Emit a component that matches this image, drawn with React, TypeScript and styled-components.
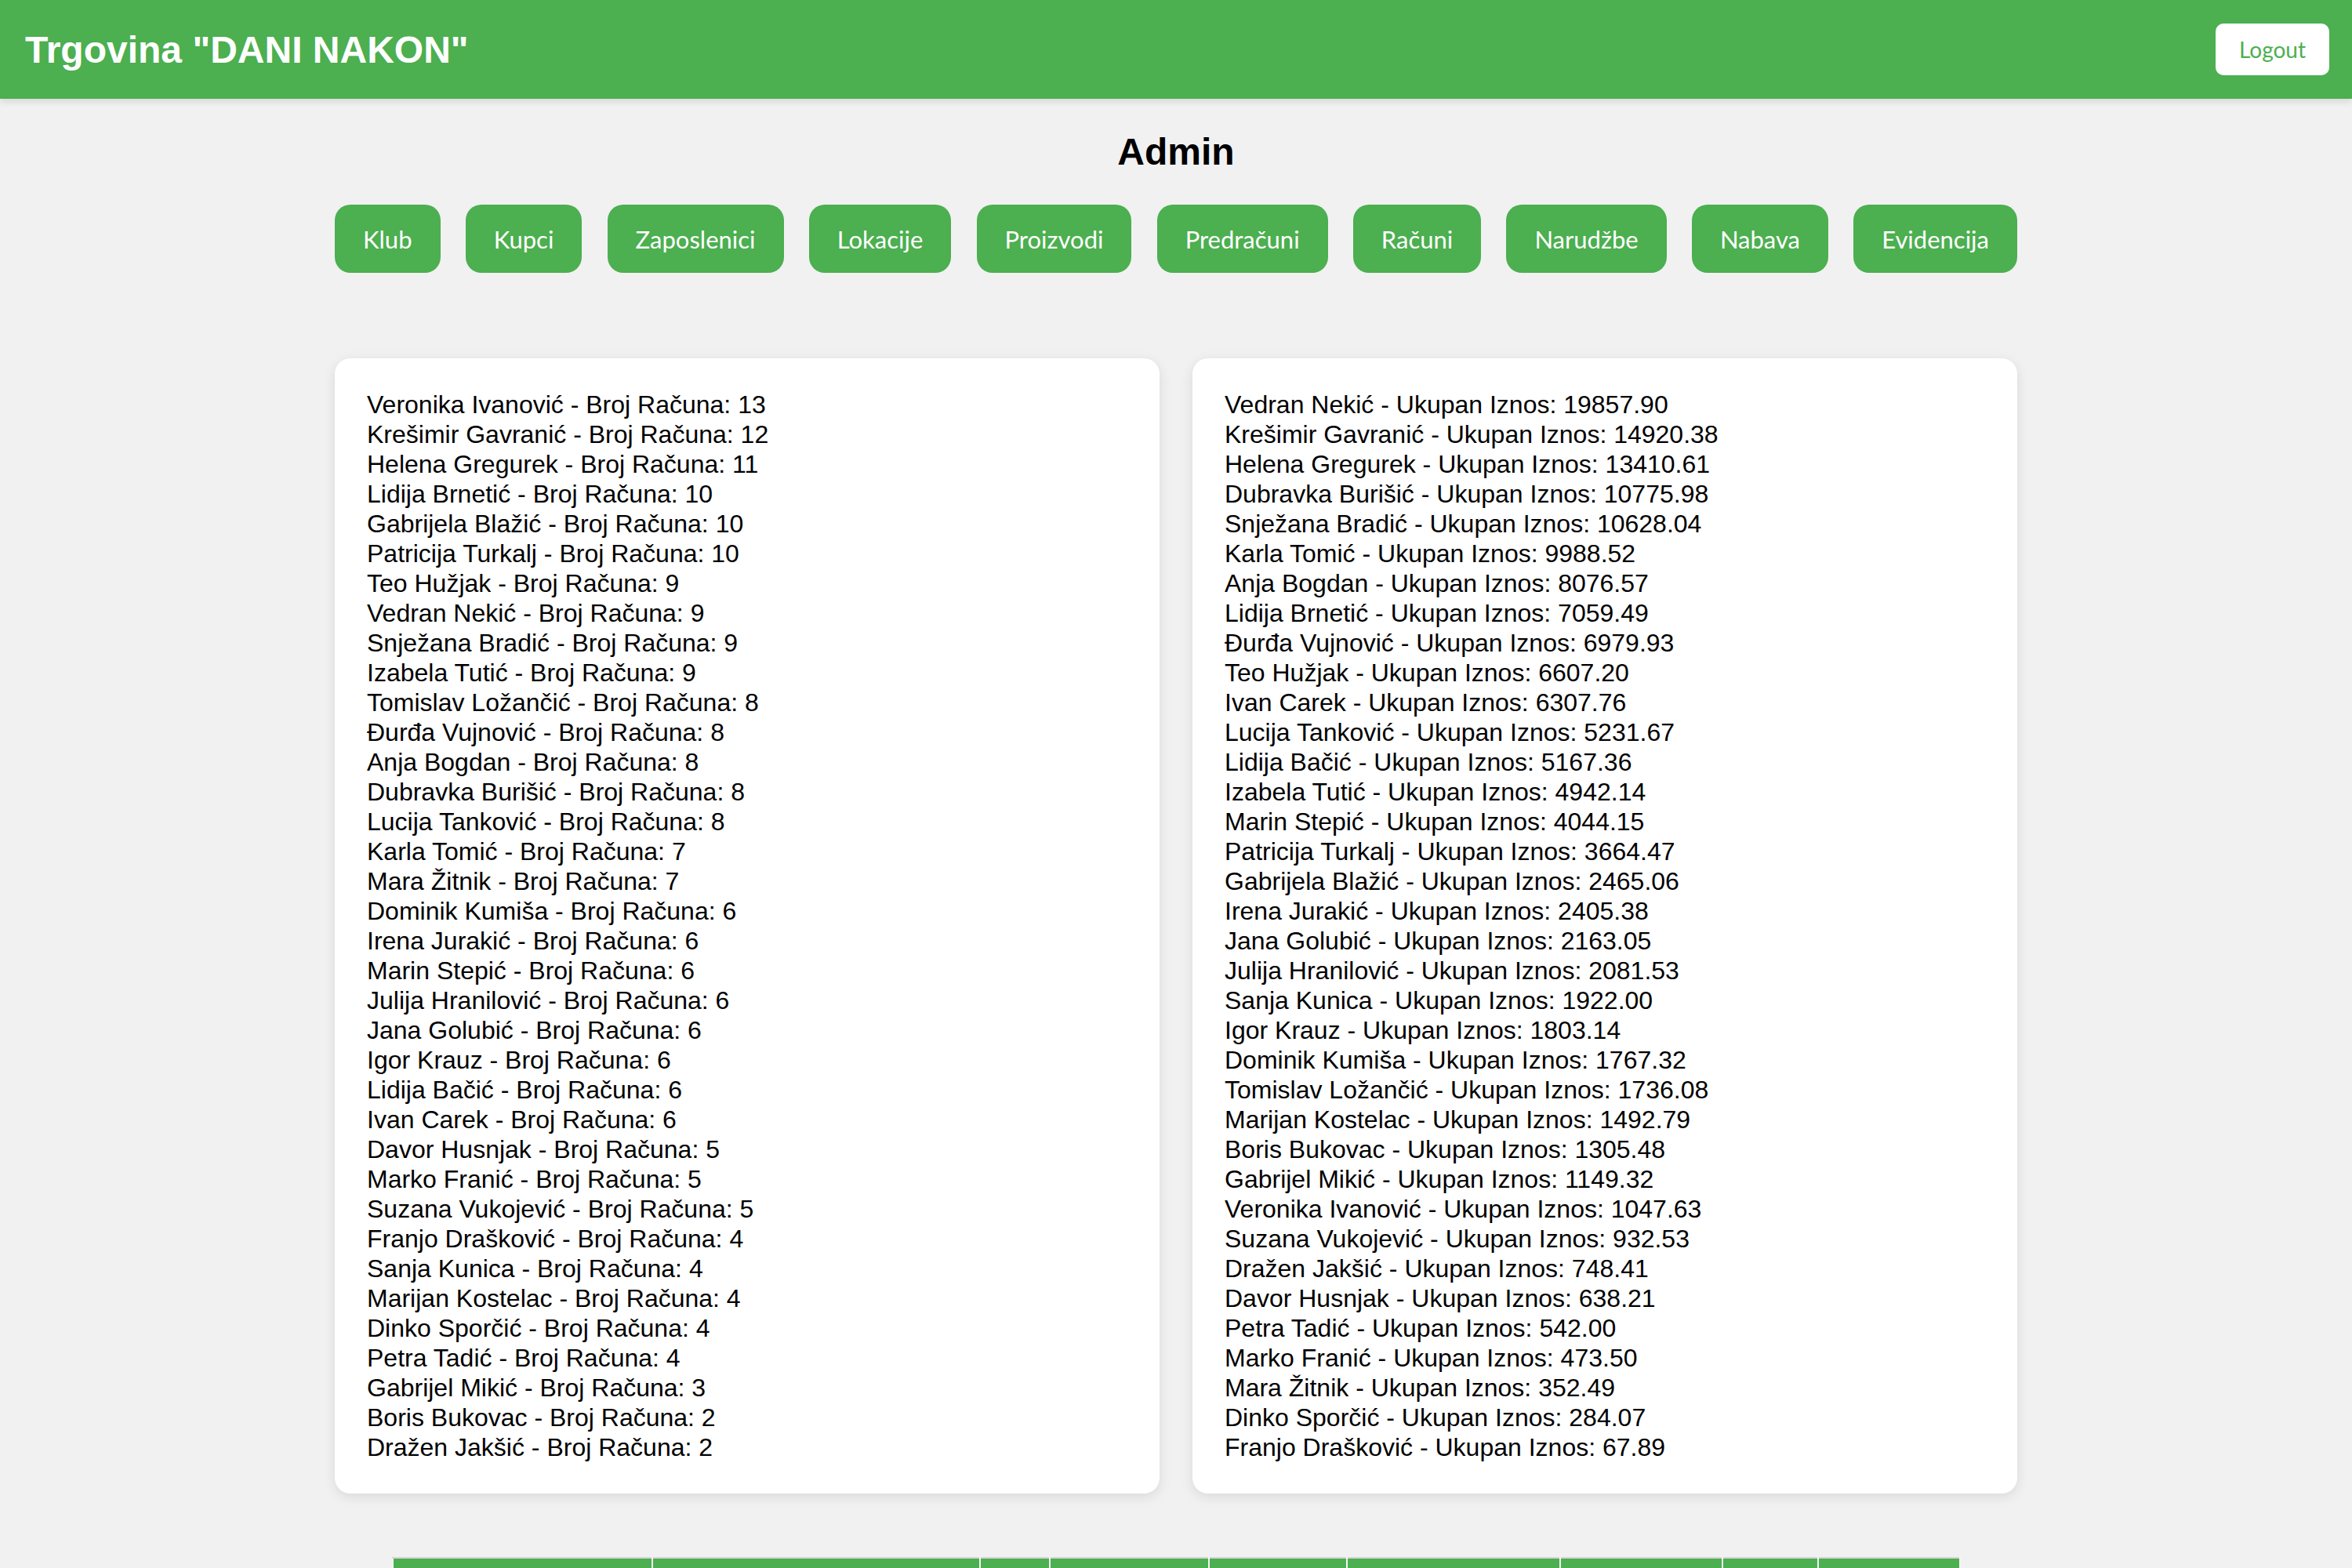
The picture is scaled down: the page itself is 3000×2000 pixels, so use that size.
import React from "react";
import styled, { createGlobalStyle } from "styled-components";

const GlobalStyle = createGlobalStyle`
  html, body {
    margin: 0;
    padding: 0;
    background: #f1f1f1;
    font-family: "Liberation Sans", Arial, sans-serif;
  }
  * { box-sizing: border-box; }
`;

const GREEN = "#4caf50";

const Header = styled.header`
  height: 126px;
  background: ${GREEN};
  display: flex;
  align-items: center;
  justify-content: space-between;
  padding: 0 29px 0 32px;
  box-shadow: 0 4px 8px rgba(0, 0, 0, 0.1);
`;

const Title = styled.h1`
  margin: 0;
  color: #fff;
  font-size: 48px;
  font-weight: bold;
  font-family: "Liberation Sans", Arial, sans-serif;
`;

const LogoutButton = styled.button`
  height: 66px;
  padding: 0 30px;
  background: #fff;
  color: ${GREEN};
  border: none;
  border-radius: 10px;
  font-family: Lato, "Open Sans", sans-serif;
  font-size: 28px;
  cursor: pointer;
`;

const Main = styled.main`
  max-width: 2146px;
  margin: 0 auto;
`;

const PageHeading = styled.h2`
  margin: 40px 0 40px;
  text-align: center;
  font-size: 48px;
  line-height: 55px;
  font-weight: bold;
  color: #000;
`;

const Nav = styled.nav`
  display: flex;
  justify-content: space-between;
  align-items: center;
`;

const NavButton = styled.button`
  height: 87px;
  padding: 0 36px;
  background: ${GREEN};
  color: #fff;
  border: none;
  border-radius: 20px;
  font-family: Lato, "Open Sans", sans-serif;
  font-size: 31px;
  cursor: pointer;
`;

const Grid = styled.section`
  margin-top: 109px;
  display: grid;
  grid-template-columns: 1fr 1fr;
  gap: 42px;
`;

const Card = styled.div`
  background: #fff;
  border-radius: 20px;
  padding: 40px 41px;
  box-shadow: 0 4px 16px rgba(0, 0, 0, 0.1);
`;

const Row = styled.div`
  font-size: 32px;
  line-height: 38px;
  color: #000;
  white-space: nowrap;
`;

const Table = styled.table`
  margin: 81px auto 0;
  border-collapse: collapse;
  table-layout: fixed;
`;

const Th = styled.th`
  background: ${GREEN};
  border: 2px solid #f4f4f4;
  border-top-color: #d6d6d6;
  height: 90px;
  padding: 0;
`;

const navItems = [
  "Klub",
  "Kupci",
  "Zaposlenici",
  "Lokacije",
  "Proizvodi",
  "Predračuni",
  "Računi",
  "Narudžbe",
  "Nabava",
  "Evidencija",
];

const counts: [string, number][] = [
  ["Veronika Ivanović", 13],
  ["Krešimir Gavranić", 12],
  ["Helena Gregurek", 11],
  ["Lidija Brnetić", 10],
  ["Gabrijela Blažić", 10],
  ["Patricija Turkalj", 10],
  ["Teo Hužjak", 9],
  ["Vedran Nekić", 9],
  ["Snježana Bradić", 9],
  ["Izabela Tutić", 9],
  ["Tomislav Ložančić", 8],
  ["Đurđa Vujnović", 8],
  ["Anja Bogdan", 8],
  ["Dubravka Burišić", 8],
  ["Lucija Tanković", 8],
  ["Karla Tomić", 7],
  ["Mara Žitnik", 7],
  ["Dominik Kumiša", 6],
  ["Irena Jurakić", 6],
  ["Marin Stepić", 6],
  ["Julija Hranilović", 6],
  ["Jana Golubić", 6],
  ["Igor Krauz", 6],
  ["Lidija Bačić", 6],
  ["Ivan Carek", 6],
  ["Davor Husnjak", 5],
  ["Marko Franić", 5],
  ["Suzana Vukojević", 5],
  ["Franjo Drašković", 4],
  ["Sanja Kunica", 4],
  ["Marijan Kostelac", 4],
  ["Dinko Sporčić", 4],
  ["Petra Tadić", 4],
  ["Gabrijel Mikić", 3],
  ["Boris Bukovac", 2],
  ["Dražen Jakšić", 2],
];

const totals: [string, string][] = [
  ["Vedran Nekić", "19857.90"],
  ["Krešimir Gavranić", "14920.38"],
  ["Helena Gregurek", "13410.61"],
  ["Dubravka Burišić", "10775.98"],
  ["Snježana Bradić", "10628.04"],
  ["Karla Tomić", "9988.52"],
  ["Anja Bogdan", "8076.57"],
  ["Lidija Brnetić", "7059.49"],
  ["Đurđa Vujnović", "6979.93"],
  ["Teo Hužjak", "6607.20"],
  ["Ivan Carek", "6307.76"],
  ["Lucija Tanković", "5231.67"],
  ["Lidija Bačić", "5167.36"],
  ["Izabela Tutić", "4942.14"],
  ["Marin Stepić", "4044.15"],
  ["Patricija Turkalj", "3664.47"],
  ["Gabrijela Blažić", "2465.06"],
  ["Irena Jurakić", "2405.38"],
  ["Jana Golubić", "2163.05"],
  ["Julija Hranilović", "2081.53"],
  ["Sanja Kunica", "1922.00"],
  ["Igor Krauz", "1803.14"],
  ["Dominik Kumiša", "1767.32"],
  ["Tomislav Ložančić", "1736.08"],
  ["Marijan Kostelac", "1492.79"],
  ["Boris Bukovac", "1305.48"],
  ["Gabrijel Mikić", "1149.32"],
  ["Veronika Ivanović", "1047.63"],
  ["Suzana Vukojević", "932.53"],
  ["Dražen Jakšić", "748.41"],
  ["Davor Husnjak", "638.21"],
  ["Petra Tadić", "542.00"],
  ["Marko Franić", "473.50"],
  ["Mara Žitnik", "352.49"],
  ["Dinko Sporčić", "284.07"],
  ["Franjo Drašković", "67.89"],
];

const columnWidths = [331, 418, 89, 203, 176, 272, 207, 122, 181];

export default function App() {
  return (
    <>
      <GlobalStyle />
      <Header>
        <Title>Trgovina "DANI NAKON"</Title>
        <LogoutButton>Logout</LogoutButton>
      </Header>
      <Main>
        <PageHeading>Admin</PageHeading>
        <Nav>
          {navItems.map((item) => (
            <NavButton key={item}>{item}</NavButton>
          ))}
        </Nav>
        <Grid>
          <Card>
            {counts.map(([name, n]) => (
              <Row key={name}>
                {name} - Broj Računa: {n}
              </Row>
            ))}
          </Card>
          <Card>
            {totals.map(([name, v]) => (
              <Row key={name}>
                {name} - Ukupan Iznos: {v}
              </Row>
            ))}
          </Card>
        </Grid>
        <Table>
          <thead>
            <tr>
              {columnWidths.map((w, i) => (
                <Th key={i} style={{ width: w }} />
              ))}
            </tr>
          </thead>
        </Table>
      </Main>
    </>
  );
}
